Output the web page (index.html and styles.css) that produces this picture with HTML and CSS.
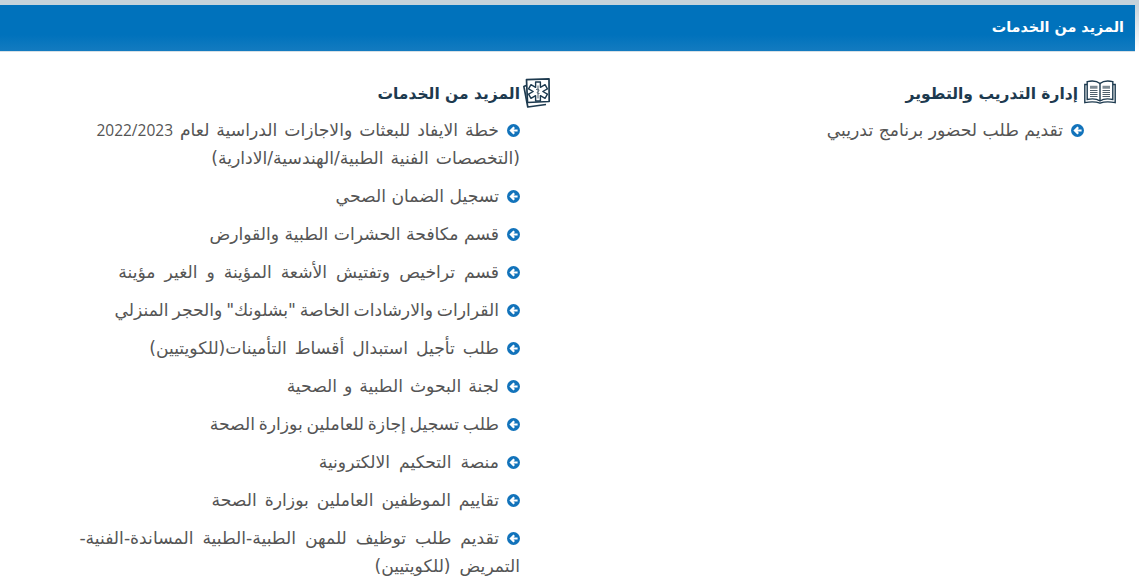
FILE: index.html
```html
<!DOCTYPE html>
<html lang="ar" dir="rtl">
<head>
    <meta charset="UTF-8">
    <title>المزيد من الخدمات</title>
    <link rel="stylesheet" href="styles.css">
</head>
<body>
    <svg class="defs" width="0" height="0">
        <symbol id="bullet" viewBox="0 0 13 13">
            <circle cx="6.5" cy="6.5" r="6.5" fill="#1273bb"/>
            <path d="M2.4 6.5L6.4 2.5L8 4.1L6.5 5.4H10.6V7.6H6.5L8 8.9L6.4 10.5Z" fill="#fff"/>
        </symbol>
    </svg>
    <div class="panel">
        <div class="panel-heading">المزيد من الخدمات</div>
        <div class="panel-body">
            <div class="column">
                <h4 class="group-title">
                    <svg class="icon-book" width="32" height="24" viewBox="0 0 32 24" fill="none" stroke="#1d3a4f" stroke-width="1.4">
                        <path d="M16 3.5C13 1 7 .8 3.2 1.6V19.5C7 18.7 13 18.9 16 21C19 18.9 25 18.7 28.8 19.5V1.6C25 .8 19 1 16 3.5Z"/>
                        <path d="M16 3.5V21M3.2 4.5H.8V22.6C6 21.6 12 21.6 16 23.2C20 21.6 26 21.6 31.2 22.6V4.5H28.8"/>
                        <path d="M6 6.5H13.5M6 8H13.5M18.5 6.5H26M18.5 8H26" stroke="#7d8a93" stroke-width="1.6"/>
                        <path d="M6 10.5H13.5M6 12.5H13.5M6 14.5H13.5M6 16.5H13.5M18.5 10.5H26M18.5 12.5H26M18.5 14.5H26M18.5 16.5H26" stroke="#4d5f6c" stroke-width="1"/>
                    </svg>
                    <span class="group-name">إدارة التدريب والتطوير</span>
                </h4>
                <ul class="service-list service-list-first">
                    <li><svg class="bullet"><use href="#bullet"/></svg>تقديم طلب لحضور برنامج تدريبي</li>
                </ul>
            </div>
            <div class="column">
                <h4 class="group-title">
                    <svg class="icon-card" width="27" height="30" viewBox="0 0 27 30" fill="none" stroke="#1d3a4f" stroke-width="1.7" stroke-linejoin="round">
                        <path d="M3.5 1.6L26 .9L26.2 23.5L4.5 24.5Z"/>
                        <path d="M3.2 7.5L.9 8.6L4.8 29L23 26.5"/>
                        <path d="M12.6 4H17.4V9.34L22.03 6.67L24.43 10.83L19.8 13.5L24.43 16.17L22.03 20.33L17.4 17.66V23H12.6V17.66L7.97 20.33L5.57 16.17L10.2 13.5L5.57 10.83L7.97 6.67L12.6 9.34Z" stroke-width="1.4"/>
                        <path d="M15 7.5V20.5M13 11.5C16 10.5 17 12.5 15 13.5C13.5 14.5 14.5 16 16.5 15.5" stroke-width="1" stroke="#4d5f6c"/>
                    </svg>
                    <span class="group-name">المزيد من الخدمات</span>
                </h4>
                <ul class="service-list">
                    <li class="loose"><svg class="bullet"><use href="#bullet"/></svg>خطة الايفاد للبعثات والاجازات الدراسية لعام <span class="num">2022/2023</span> (التخصصات الفنية الطبية/الهندسية/الادارية)</li>
                    <li><svg class="bullet"><use href="#bullet"/></svg>تسجيل الضمان الصحي</li>
                    <li><svg class="bullet"><use href="#bullet"/></svg>قسم مكافحة الحشرات الطبية والقوارض</li>
                    <li class="wide"><svg class="bullet"><use href="#bullet"/></svg>قسم تراخيص وتفتيش الأشعة المؤينة و الغير مؤينة</li>
                    <li class="narrow"><svg class="bullet"><use href="#bullet"/></svg>القرارات والارشادات الخاصة "بشلونك" والحجر المنزلي</li>
                    <li class="roomy"><svg class="bullet"><use href="#bullet"/></svg>طلب تأجيل استبدال أقساط التأمينات(للكويتيين)</li>
                    <li class="loose"><svg class="bullet"><use href="#bullet"/></svg>لجنة البحوث الطبية و الصحية</li>
                    <li class="narrow"><svg class="bullet"><use href="#bullet"/></svg>طلب تسجيل إجازة للعاملين بوزارة الصحة</li>
                    <li class="wide"><svg class="bullet"><use href="#bullet"/></svg>منصة التحكيم الالكترونية</li>
                    <li class="roomy"><svg class="bullet"><use href="#bullet"/></svg>تقاييم الموظفين العاملين بوزارة الصحة</li>
                    <li class="wide"><svg class="bullet"><use href="#bullet"/></svg>تقديم طلب توظيف للمهن الطبية-الطبية المساندة-الفنية-التمريض (للكويتيين)</li>
                </ul>
            </div>
        </div>
    </div>
</body>
</html>
```

FILE: styles.css
```css
body {
    margin: 0;
    height: 587px;
    overflow: hidden;
    font-family: "DejaVu Sans", sans-serif;
    background: #fff;
}
.defs {
    display: block;
}
.panel {
    border-top: 5px solid #c5d3db;
    background: linear-gradient(#c5d3db, #fff 46px);
}
.panel-heading {
    height: 46px;
    margin-right: 4px;
    padding: 0 11px;
    line-height: 45px;
    font-size: 14.4px;
    font-weight: bold;
    color: #fff;
    background: linear-gradient(#0072bc 65%, #137bc0);
    border-bottom: 1px solid #d8e0e5;
}
.panel-body {
    display: flex;
    padding: 26px 23px 0 0;
    background: #fff;
}
.column {
    width: 566px;
}
.column + .column {
    width: 504px;
}
.group-title {
    display: flex;
    align-items: center;
    gap: 3px;
    height: 30px;
    margin: 0 0 8px;
    font-size: 15.5px;
    font-weight: bold;
    color: #1d3a4f;
}
.group-name {
    padding-top: 2px;
}
.icon-book {
    margin-bottom: 2px;
    margin-left: 3px;
}
.service-list {
    list-style: none;
    margin: 0;
    padding: 0 30px 0 0;
}
.service-list-first {
    padding-right: 32px;
}
.service-list li {
    margin-bottom: 10px;
    font-size: 17.2px;
    line-height: 28px;
    color: #555;
}
.service-list .loose {
    word-spacing: 1.5px;
}
.service-list .roomy {
    word-spacing: 2.5px;
}
.service-list .wide {
    word-spacing: 3.5px;
}
.service-list .narrow {
    word-spacing: -1.7px;
}
.bullet {
    width: 13px;
    height: 13px;
    margin-left: 8px;
    vertical-align: -1px;
}
.num {
    font-family: "Open Sans", sans-serif;
    font-size: 15.5px;
}
```
